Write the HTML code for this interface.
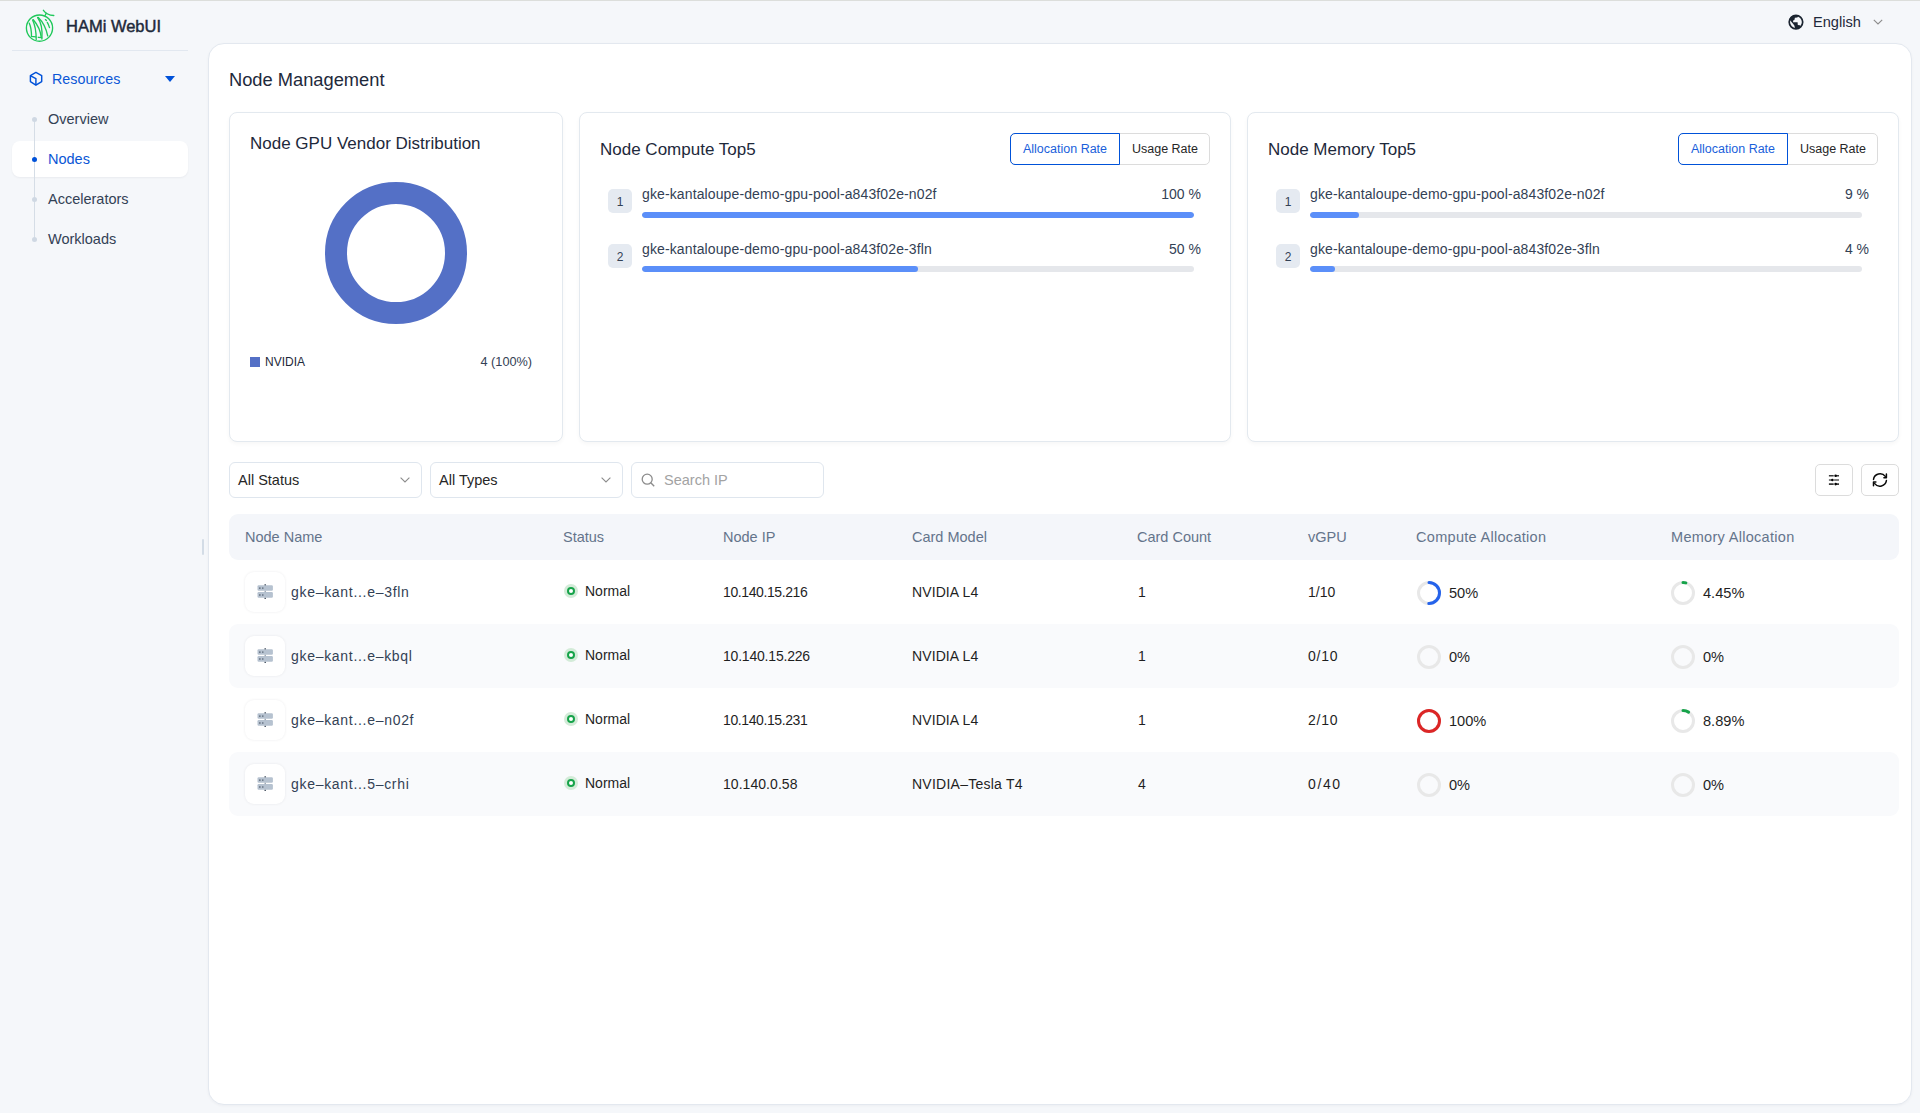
<!DOCTYPE html>
<html><head><meta charset="utf-8">
<style>
*{box-sizing:border-box;margin:0;padding:0}
html,body{width:1920px;height:1113px;overflow:hidden}
body{background:#f5f7fa;font-family:"Liberation Sans",sans-serif;position:relative;color:#1e293b}
.a{position:absolute;white-space:nowrap}
.topline{left:0;top:0;width:1920px;height:1px;background:#dcdedb}
/* sidebar */
.brand{left:66px;top:16px;font-size:16.5px;font-weight:400;-webkit-text-stroke:.45px #1e293b;color:#1e293b;line-height:20px}
.sdiv{left:12px;top:50px;width:176px;height:1px;background:#e2e8f0}
.res{left:52px;top:70px;font-size:14.3px;line-height:18px;color:#0a56d6}
.menu{left:48px;font-size:14.5px;line-height:18px;color:#334155}
.vline{left:34px;top:119px;width:1px;height:120px;background:#d5dde6}
.dot{width:5px;height:5px;border-radius:50%;background:#cfd8e3;left:32px}
.navact{left:12px;top:141px;width:176px;height:36px;background:#fff;border-radius:8px;box-shadow:0 1px 2px rgba(15,23,42,.05)}
/* header */
.lang{left:1813px;top:14px;font-size:14.6px;line-height:17px;color:#1e293b}
/* main card */
.main{left:208px;top:43px;width:1704px;height:1062px;background:#fff;border:1px solid #e3e8ef;border-radius:16px;box-shadow:0 1px 3px rgba(15,23,42,.04)}
.ptitle{left:229px;top:69px;font-size:18.3px;line-height:22px;color:#1e293b}
.card{top:112px;height:330px;background:#fff;border:1px solid #e3e9ef;border-radius:8px;box-shadow:0 2px 4px rgba(15,23,42,.035)}
.ctitle{font-size:17px;line-height:20px;color:#1e293b}
.btng{top:133px;height:32px;width:200px;border:1px solid #dcdcdc;border-radius:5px;background:#fff}
.btn1{left:-1px;top:-1px;width:110px;height:32px;border:1px solid #0052d9;border-radius:5px 0 0 5px;color:#1a5fdb;font-size:12.5px;line-height:30px;text-align:center}
.btn2{left:109px;top:0;width:90px;height:30px;color:#262626;font-size:12.5px;line-height:30px;text-align:center}
.badge{width:24px;height:24px;border-radius:5px;background:#e5eaf1;color:#334155;font-size:12px;line-height:26px;text-align:center}
.tname{font-size:14px;line-height:16px;color:#334155;letter-spacing:.12px}
.tval{font-size:14px;line-height:16px;color:#334155;text-align:right}
.track{width:552px;height:6px;border-radius:3px;background:#e5e7eb;overflow:hidden}
.fill{position:absolute;left:0;top:0;height:6px;border-radius:3px;background:#5b8ff9}
/* filters */
.sel{top:462px;height:36px;width:193px;border:1px solid #dfe6ee;border-radius:6px;background:#fff}
.seltxt{left:8px;top:8px;font-size:14.5px;line-height:18px;color:#262626}
.ibtn{top:464px;width:38px;height:32px;border:1px solid #dcdcdc;border-radius:5px;background:#fff}
/* table */
.thead{left:229px;top:514px;width:1670px;height:46px;background:#f4f6fa;border-radius:9px}
.th{top:528px;font-size:14.5px;line-height:18px;color:#64748b}
.row{left:229px;width:1670px;height:64px;border-radius:9px}
.alt{background:#f9fafc}
.td{font-size:14px;line-height:18px;color:#1f1f1f}
.ibox{left:245px;width:40px;height:40px;border-radius:9px;background:#fff;box-shadow:0 0 3px rgba(15,23,42,.08)}
.nname{left:291px;font-size:14px;line-height:18px;color:#334155;letter-spacing:.7px}
</style></head><body>
<div class="a topline"></div>

<!-- sidebar -->
<svg class="a" style="left:20px;top:6px" width="40" height="40" viewBox="0 0 40 40">
  <g fill="none" stroke="#1fc85a" stroke-width="1.35" stroke-linecap="round">
    <circle cx="19.5" cy="22.1" r="13.1"/>
    <path d="M23.4 4.3 C25 6.5 28 9 33.8 9.5"/>
    <path d="M26.2 7.4 L25.2 9.3"/>
    <path d="M9.3 17.2 C11 21 11.5 26 11.5 30.5 L15.8 30.9"/>
    <path d="M12.6 14 C15 19 16.2 26 16.2 33.4"/>
    <path d="M13.3 13.7 C17 18 20.5 24 21.2 31.3"/>
    <path d="M17.6 11.5 C21 16 22.5 25 21.9 33"/>
    <path d="M18.3 31.3 L21.6 31.6"/>
    <path d="M18.3 11.5 C23 16 26 22 27.7 29.8"/>
    <path d="M25.4 13.6 L26.4 14.5"/>
    <path d="M27.3 16.4 C28.3 18 29 20 29.5 21.6"/>
  </g>
</svg>
<div class="a brand">HAMi WebUI</div>
<div class="a sdiv"></div>
<svg class="a" style="left:29px;top:71px" width="14" height="16" viewBox="0 0 14 16">
  <path d="M6.9 1.4 L12.7 4.6 V10.6 L6.9 14.2 L1.4 10.6 V4.6 Z" fill="none" stroke="#0052d9" stroke-width="1.45" stroke-linejoin="round"/>
  <path d="M1.7 4.8 L6.9 7.7 V13.8" fill="none" stroke="#0052d9" stroke-width="1.45" stroke-linejoin="round"/>
</svg>
<div class="a res">Resources</div>
<svg class="a" style="left:165px;top:76px" width="10" height="6" viewBox="0 0 10 6"><path d="M0 0 H10 L5 6 Z" fill="#0052d9"/></svg>
<div class="a navact"></div>
<div class="a vline"></div>
<div class="a dot" style="top:117px"></div>
<div class="a dot" style="top:157px;background:#0052d9"></div>
<div class="a dot" style="top:197px"></div>
<div class="a dot" style="top:237px"></div>
<div class="a menu" style="top:110px">Overview</div>
<div class="a menu" style="top:150px;color:#0a56d6">Nodes</div>
<div class="a menu" style="top:190px">Accelerators</div>
<div class="a menu" style="top:230px">Workloads</div>
<div class="a" style="left:202px;top:539px;width:2px;height:16px;background:#d3dce6;border-radius:1px"></div>

<!-- header -->
<svg class="a" style="left:1784px;top:10px" width="24" height="24" viewBox="0 0 24 24">
  <circle cx="11.95" cy="12.05" r="6.75" fill="none" stroke="#1b2430" stroke-width="1.7"/>
  <path d="M5.2 9.6 C6.5 6.5 9 5.2 12 5.2 L14.2 6.1 L13.4 7.6 L10.9 7.8 L10.4 10.1 L9.1 10.4 L9.1 12.2 L13.6 12.3 L13.8 14.9 L15.8 15.3 L16.9 16.5 C15.5 18 13.5 18.8 11.3 18.8 L10.2 15.2 L6.3 10.6 Z" fill="#1b2430"/>
</svg>
<div class="a lang">English</div>
<svg class="a" style="left:1873px;top:19px" width="10" height="6" viewBox="0 0 10 6"><path d="M0.8 0.8 L5 5 L9.2 0.8" fill="none" stroke="#8c8c8c" stroke-width="1.1"/></svg>

<!-- main -->
<div class="a main"></div>
<div class="a ptitle">Node Management</div>

<!-- card 1 -->
<div class="a card" style="left:229px;width:334px"></div>
<div class="a ctitle" style="left:250px;top:134px">Node GPU Vendor Distribution</div>
<svg class="a" style="left:324px;top:181px" width="144" height="144" viewBox="0 0 144 144">
  <circle cx="72" cy="72" r="60" fill="none" stroke="#5470c6" stroke-width="22"/>
</svg>
<div class="a" style="left:250px;top:357px;width:10px;height:10px;background:#5470c6"></div>
<div class="a" style="left:265px;top:355px;font-size:12px;line-height:15px;color:#1e293b">NVIDIA</div>
<div class="a" style="right:1388px;top:355px;font-size:12.7px;line-height:15px;color:#334155">4 (100%)</div>

<!-- card 2 -->
<div class="a card" style="left:579px;width:652px"></div>
<div class="a ctitle" style="left:600px;top:140px">Node Compute Top5</div>
<div class="a btng" style="left:1010px"><div class="a btn1">Allocation Rate</div><div class="a btn2">Usage Rate</div></div>
<div class="a badge" style="left:608px;top:189px">1</div>
<div class="a tname" style="left:642px;top:186px">gke-kantaloupe-demo-gpu-pool-a843f02e-n02f</div>
<div class="a tval" style="right:719px;top:186px">100 %</div>
<div class="a track" style="left:642px;top:212px"><div class="fill" style="width:552px"></div></div>
<div class="a badge" style="left:608px;top:244px">2</div>
<div class="a tname" style="left:642px;top:241px">gke-kantaloupe-demo-gpu-pool-a843f02e-3fln</div>
<div class="a tval" style="right:719px;top:241px">50 %</div>
<div class="a track" style="left:642px;top:266px"><div class="fill" style="width:276px"></div></div>

<!-- card 3 -->
<div class="a card" style="left:1247px;width:652px"></div>
<div class="a ctitle" style="left:1268px;top:140px">Node Memory Top5</div>
<div class="a btng" style="left:1678px"><div class="a btn1">Allocation Rate</div><div class="a btn2">Usage Rate</div></div>
<div class="a badge" style="left:1276px;top:189px">1</div>
<div class="a tname" style="left:1310px;top:186px">gke-kantaloupe-demo-gpu-pool-a843f02e-n02f</div>
<div class="a tval" style="right:51px;top:186px">9 %</div>
<div class="a track" style="left:1310px;top:212px"><div class="fill" style="width:49px"></div></div>
<div class="a badge" style="left:1276px;top:244px">2</div>
<div class="a tname" style="left:1310px;top:241px">gke-kantaloupe-demo-gpu-pool-a843f02e-3fln</div>
<div class="a tval" style="right:51px;top:241px">4 %</div>
<div class="a track" style="left:1310px;top:266px"><div class="fill" style="width:25px"></div></div>

<!-- filters -->
<div class="a sel" style="left:229px"><div class="a seltxt">All Status</div>
<svg class="a" style="left:170px;top:14px" width="10" height="6" viewBox="0 0 10 6"><path d="M0.6 0.6 L5 5 L9.4 0.6" fill="none" stroke="#8c8c8c" stroke-width="1.1"/></svg></div>
<div class="a sel" style="left:430px"><div class="a seltxt">All Types</div>
<svg class="a" style="left:170px;top:14px" width="10" height="6" viewBox="0 0 10 6"><path d="M0.6 0.6 L5 5 L9.4 0.6" fill="none" stroke="#8c8c8c" stroke-width="1.1"/></svg></div>
<div class="a sel" style="left:631px">
<svg class="a" style="left:9px;top:10px" width="15" height="15" viewBox="0 0 15 15"><circle cx="6.2" cy="6.2" r="5" fill="none" stroke="#8c8c8c" stroke-width="1.3"/><path d="M9.8 9.8 L13.2 13.2" stroke="#8c8c8c" stroke-width="1.4"/></svg>
<div class="a seltxt" style="left:32px;color:#a3a3a3">Search IP</div></div>
<div class="a ibtn" style="left:1815px"></div>
<svg class="a" style="left:1822px;top:468px" width="24" height="24" viewBox="0 0 24 24">
 <g stroke-width="1.6" fill="none">
  <path d="M6.9 7.8 H11.7 M13.3 7.8 H17" stroke="#3a3a3a"/>
  <path d="M6.9 12 H10.6 M12.1 12 H17" stroke="#5a5a5a"/>
  <path d="M6.9 16.1 H11.7 M13.3 16.1 H17" stroke="#3a3a3a"/>
 </g>
 <g fill="#000"><circle cx="13.6" cy="7.8" r="1.3"/><circle cx="10.4" cy="12" r="1.3"/><circle cx="13.6" cy="16.1" r="1.3"/></g>
</svg>
<div class="a ibtn" style="left:1861px"></div>
<svg class="a" style="left:1868px;top:468px" width="24" height="24" viewBox="0 0 24 24">
 <g fill="none" stroke="#0a0a0a" stroke-width="1.5" stroke-linecap="round" stroke-linejoin="round">
  <path d="M5.5 11.4 A6.6 6.6 0 0 1 17.3 8.4"/>
  <path d="M18.4 6.1 V9.8 H15.9"/>
  <path d="M18.4 12.6 A6.6 6.6 0 0 1 6.7 15.6"/>
  <path d="M5.5 17.8 V14.1 H7.9"/>
 </g>
</svg>

<!-- table -->
<div class="a thead"></div>
<div class="a th" style="left:245px">Node Name</div>
<div class="a th" style="left:563px">Status</div>
<div class="a th" style="left:723px">Node IP</div>
<div class="a th" style="left:912px">Card Model</div>
<div class="a th" style="left:1137px">Card Count</div>
<div class="a th" style="left:1308px">vGPU</div>
<div class="a th" style="left:1416px;letter-spacing:.3px">Compute Allocation</div>
<div class="a th" style="left:1671px;letter-spacing:.3px">Memory Allocation</div>

<div id="rows">
<div class="a ibox" style="top:572px"><svg class="a" style="left:12px;top:11px" width="16" height="16" viewBox="0 0 16 16"><rect x="0.5" y="2.2" width="15.4" height="5.6" rx="1.2" fill="#b6c2d0"/><rect x="0.5" y="9.1" width="15.4" height="5.6" rx="1.2" fill="#b6c2d0"/><g fill="#3f4b5b"><rect x="2" y="4.6" width="1.6" height="1"/><rect x="5.2" y="4.5" width="1.2" height="1.2"/><rect x="2" y="11.5" width="1.6" height="1"/><rect x="5.2" y="11.4" width="1.2" height="1.2"/><rect x="7.5" y="1.2" width="1.4" height="1.2"/><rect x="7.5" y="14.8" width="1.4" height="1.2"/></g><rect x="7.6" y="7.8" width="1.2" height="1.3" fill="#8a96a6"/></svg></div>
<div class="a nname" style="top:583px">gke–kant...e–3fln</div>
<div class="a" style="left:564px;top:584px;width:14px;height:14px;border-radius:50%;background:#d3ebd8"></div>
<div class="a" style="left:567px;top:587px;width:8px;height:8px;border-radius:50%;border:2px solid #16a34a;background:#fff"></div>
<div class="a td" style="left:585px;top:582px">Normal</div>
<div class="a td" style="left:723px;top:583px;letter-spacing:-0.4px">10.140.15.216</div>
<div class="a td" style="left:912px;top:583px;letter-spacing:0.1px">NVIDIA L4</div>
<div class="a td" style="left:1138px;top:583px">1</div>
<div class="a td" style="left:1308px;top:583px;letter-spacing:0px">1/10</div>
<svg class="a" style="left:1417px;top:581px" width="24" height="24" viewBox="0 0 24 24"><circle cx="12" cy="12" r="10.5" fill="none" stroke="#e8e8e8" stroke-width="3"/><circle cx="12" cy="12" r="10.5" fill="none" stroke="#2563eb" stroke-width="3" stroke-linecap="round" stroke-dasharray="32.99 65.97" transform="rotate(-90 12 12)"/></svg>
<div class="a td" style="left:1449px;top:584px;font-size:14.6px">50%</div>
<svg class="a" style="left:1671px;top:581px" width="24" height="24" viewBox="0 0 24 24"><circle cx="12" cy="12" r="10.5" fill="none" stroke="#e8e8e8" stroke-width="3"/><circle cx="12" cy="12" r="10.5" fill="none" stroke="#16a34a" stroke-width="3" stroke-linecap="round" stroke-dasharray="2.94 65.97" transform="rotate(-90 12 12)"/></svg>
<div class="a td" style="left:1703px;top:584px;font-size:14.6px">4.45%</div>
<div class="a row alt" style="top:624px"></div>
<div class="a ibox" style="top:636px"><svg class="a" style="left:12px;top:11px" width="16" height="16" viewBox="0 0 16 16"><rect x="0.5" y="2.2" width="15.4" height="5.6" rx="1.2" fill="#b6c2d0"/><rect x="0.5" y="9.1" width="15.4" height="5.6" rx="1.2" fill="#b6c2d0"/><g fill="#3f4b5b"><rect x="2" y="4.6" width="1.6" height="1"/><rect x="5.2" y="4.5" width="1.2" height="1.2"/><rect x="2" y="11.5" width="1.6" height="1"/><rect x="5.2" y="11.4" width="1.2" height="1.2"/><rect x="7.5" y="1.2" width="1.4" height="1.2"/><rect x="7.5" y="14.8" width="1.4" height="1.2"/></g><rect x="7.6" y="7.8" width="1.2" height="1.3" fill="#8a96a6"/></svg></div>
<div class="a nname" style="top:647px">gke–kant...e–kbql</div>
<div class="a" style="left:564px;top:648px;width:14px;height:14px;border-radius:50%;background:#d3ebd8"></div>
<div class="a" style="left:567px;top:651px;width:8px;height:8px;border-radius:50%;border:2px solid #16a34a;background:#fff"></div>
<div class="a td" style="left:585px;top:646px">Normal</div>
<div class="a td" style="left:723px;top:647px;letter-spacing:-0.2px">10.140.15.226</div>
<div class="a td" style="left:912px;top:647px;letter-spacing:0.1px">NVIDIA L4</div>
<div class="a td" style="left:1138px;top:647px">1</div>
<div class="a td" style="left:1308px;top:647px;letter-spacing:0.8px">0/10</div>
<svg class="a" style="left:1417px;top:645px" width="24" height="24" viewBox="0 0 24 24"><circle cx="12" cy="12" r="10.5" fill="none" stroke="#e8e8e8" stroke-width="3"/></svg>
<div class="a td" style="left:1449px;top:648px;font-size:14.6px">0%</div>
<svg class="a" style="left:1671px;top:645px" width="24" height="24" viewBox="0 0 24 24"><circle cx="12" cy="12" r="10.5" fill="none" stroke="#e8e8e8" stroke-width="3"/></svg>
<div class="a td" style="left:1703px;top:648px;font-size:14.6px">0%</div>
<div class="a ibox" style="top:700px"><svg class="a" style="left:12px;top:11px" width="16" height="16" viewBox="0 0 16 16"><rect x="0.5" y="2.2" width="15.4" height="5.6" rx="1.2" fill="#b6c2d0"/><rect x="0.5" y="9.1" width="15.4" height="5.6" rx="1.2" fill="#b6c2d0"/><g fill="#3f4b5b"><rect x="2" y="4.6" width="1.6" height="1"/><rect x="5.2" y="4.5" width="1.2" height="1.2"/><rect x="2" y="11.5" width="1.6" height="1"/><rect x="5.2" y="11.4" width="1.2" height="1.2"/><rect x="7.5" y="1.2" width="1.4" height="1.2"/><rect x="7.5" y="14.8" width="1.4" height="1.2"/></g><rect x="7.6" y="7.8" width="1.2" height="1.3" fill="#8a96a6"/></svg></div>
<div class="a nname" style="top:711px">gke–kant...e–n02f</div>
<div class="a" style="left:564px;top:712px;width:14px;height:14px;border-radius:50%;background:#d3ebd8"></div>
<div class="a" style="left:567px;top:715px;width:8px;height:8px;border-radius:50%;border:2px solid #16a34a;background:#fff"></div>
<div class="a td" style="left:585px;top:710px">Normal</div>
<div class="a td" style="left:723px;top:711px;letter-spacing:-0.4px">10.140.15.231</div>
<div class="a td" style="left:912px;top:711px;letter-spacing:0.1px">NVIDIA L4</div>
<div class="a td" style="left:1138px;top:711px">1</div>
<div class="a td" style="left:1308px;top:711px;letter-spacing:0.8px">2/10</div>
<svg class="a" style="left:1417px;top:709px" width="24" height="24" viewBox="0 0 24 24"><circle cx="12" cy="12" r="10.5" fill="none" stroke="#e8e8e8" stroke-width="3"/><circle cx="12" cy="12" r="10.5" fill="none" stroke="#dc2626" stroke-width="3"/></svg>
<div class="a td" style="left:1449px;top:712px;font-size:14.6px">100%</div>
<svg class="a" style="left:1671px;top:709px" width="24" height="24" viewBox="0 0 24 24"><circle cx="12" cy="12" r="10.5" fill="none" stroke="#e8e8e8" stroke-width="3"/><circle cx="12" cy="12" r="10.5" fill="none" stroke="#16a34a" stroke-width="3" stroke-linecap="round" stroke-dasharray="5.87 65.97" transform="rotate(-90 12 12)"/></svg>
<div class="a td" style="left:1703px;top:712px;font-size:14.6px">8.89%</div>
<div class="a row alt" style="top:752px"></div>
<div class="a ibox" style="top:764px"><svg class="a" style="left:12px;top:11px" width="16" height="16" viewBox="0 0 16 16"><rect x="0.5" y="2.2" width="15.4" height="5.6" rx="1.2" fill="#b6c2d0"/><rect x="0.5" y="9.1" width="15.4" height="5.6" rx="1.2" fill="#b6c2d0"/><g fill="#3f4b5b"><rect x="2" y="4.6" width="1.6" height="1"/><rect x="5.2" y="4.5" width="1.2" height="1.2"/><rect x="2" y="11.5" width="1.6" height="1"/><rect x="5.2" y="11.4" width="1.2" height="1.2"/><rect x="7.5" y="1.2" width="1.4" height="1.2"/><rect x="7.5" y="14.8" width="1.4" height="1.2"/></g><rect x="7.6" y="7.8" width="1.2" height="1.3" fill="#8a96a6"/></svg></div>
<div class="a nname" style="top:775px">gke–kant...5–crhi</div>
<div class="a" style="left:564px;top:776px;width:14px;height:14px;border-radius:50%;background:#d3ebd8"></div>
<div class="a" style="left:567px;top:779px;width:8px;height:8px;border-radius:50%;border:2px solid #16a34a;background:#fff"></div>
<div class="a td" style="left:585px;top:774px">Normal</div>
<div class="a td" style="left:723px;top:775px;letter-spacing:0.05px">10.140.0.58</div>
<div class="a td" style="left:912px;top:775px;letter-spacing:0.25px">NVIDIA–Tesla T4</div>
<div class="a td" style="left:1138px;top:775px">4</div>
<div class="a td" style="left:1308px;top:775px;letter-spacing:1.6px">0/40</div>
<svg class="a" style="left:1417px;top:773px" width="24" height="24" viewBox="0 0 24 24"><circle cx="12" cy="12" r="10.5" fill="none" stroke="#e8e8e8" stroke-width="3"/></svg>
<div class="a td" style="left:1449px;top:776px;font-size:14.6px">0%</div>
<svg class="a" style="left:1671px;top:773px" width="24" height="24" viewBox="0 0 24 24"><circle cx="12" cy="12" r="10.5" fill="none" stroke="#e8e8e8" stroke-width="3"/></svg>
<div class="a td" style="left:1703px;top:776px;font-size:14.6px">0%</div>
</div>
</body></html>
